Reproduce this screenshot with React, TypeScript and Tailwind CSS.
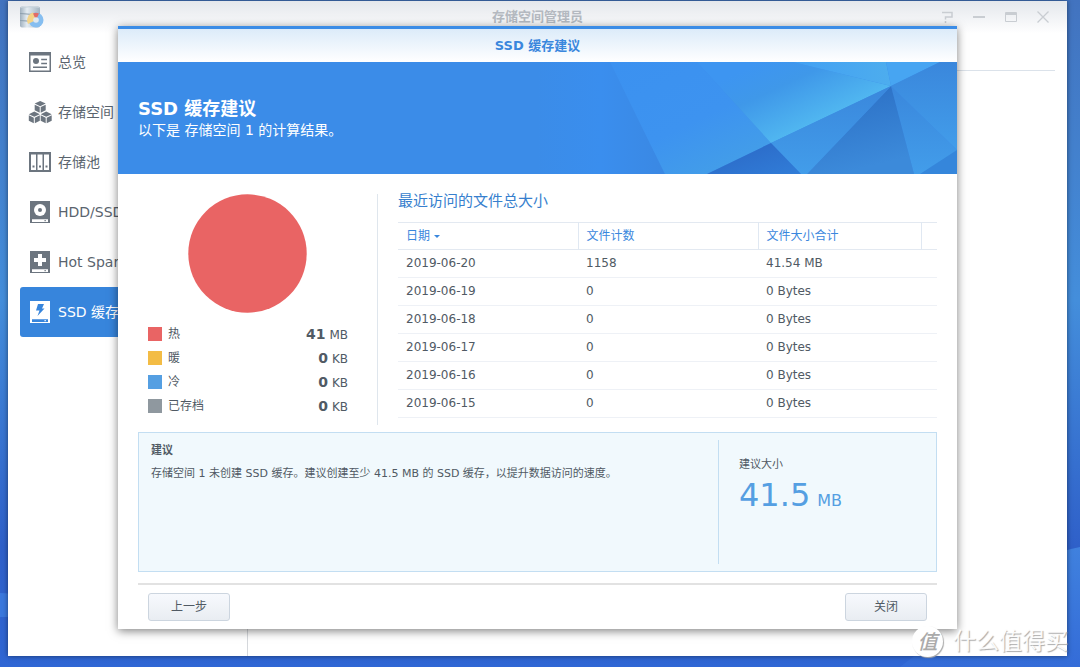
import type { ReactNode } from "react";
import clsx from "clsx";

const navItems = [
  { label: "总览", icon: <OverviewIcon /> },
  { label: "存储空间", icon: <VolumeIcon /> },
  { label: "存储池", icon: <PoolIcon /> },
  { label: "HDD/SSD", icon: <DiskIcon /> },
  { label: "Hot Spare", icon: <SpareIcon /> },
  { label: "SSD 缓存", icon: <CacheIcon />, active: true },
];

const legend = [
  { label: "热", value: "41", unit: "MB", color: "bg-[#e96464]" },
  { label: "暖", value: "0", unit: "KB", color: "bg-[#f3bc45]" },
  { label: "冷", value: "0", unit: "KB", color: "bg-[#559fe2]" },
  { label: "已存档", value: "0", unit: "KB", color: "bg-[#8f989f]" },
];

const rows = [
  { date: "2019-06-20", count: "1158", size: "41.54 MB" },
  { date: "2019-06-19", count: "0", size: "0 Bytes" },
  { date: "2019-06-18", count: "0", size: "0 Bytes" },
  { date: "2019-06-17", count: "0", size: "0 Bytes" },
  { date: "2019-06-16", count: "0", size: "0 Bytes" },
  { date: "2019-06-15", count: "0", size: "0 Bytes" },
];

function OverviewIcon() {
  return (
    <svg viewBox="0 0 24 24" className="h-6 w-6" fill="none">
      <path fill="currentColor" fillRule="evenodd" d="M1 2h22v20H1zM2.5 5.500v15h19v-15z" />
      <circle cx="8" cy="11" r="3" fill="currentColor" />
      <path stroke="currentColor" strokeWidth="1.6" d="M13.200 9.500h5.800M13.200 13.500h5.800M5 17.200h14" />
    </svg>
  );
}

function Cube({ x, y }: { x: number; y: number }) {
  return (
    <g transform={`translate(${x} ${y})`} fill="currentColor">
      <path d="M5.5 0 11 2.6 5.5 5.2 0 2.6z" />
      <path d="M0 3.7 5 6.1v5.6L0 9.2z" />
      <path d="M11 3.7 6 6.1v5.6l5-2.5z" />
    </g>
  );
}

function VolumeIcon() {
  return (
    <svg viewBox="0 0 24 24" className="h-6 w-6">
      <Cube x={6.7} y={1} />
      <Cube x={0.8} y={11.6} />
      <Cube x={12.7} y={11.6} />
    </svg>
  );
}

function PoolIcon() {
  return (
    <svg viewBox="0 0 24 24" className="h-6 w-6" fill="currentColor">
      <path fillRule="evenodd" d="M1 2h22v20H1zM3 4.5V20h5V4.5zM9.5 4.5V20h5V4.5zM16 4.5V20h5V4.5z" />
      <path d="M4.5 15.500h2v2h-2zM11 15.500h2v2h-2zM17.500 15.500h2v2h-2z" />
    </svg>
  );
}

function DriveBase({ children }: { children: ReactNode }) {
  return (
    <svg viewBox="0 0 24 24" className="h-6 w-6">
      <path fill="currentColor" fillRule="evenodd" d="M2 1h20v22H2zM4 19.2V22h16v-2.8z" />
      <path fill="currentColor" d="M16.5 20h1.3v1.2h-1.3z" />
      {children}
    </svg>
  );
}

function DiskIcon() {
  return (
    <DriveBase>
      <circle cx="12" cy="10" r="6" fill="#fff" />
      <circle cx="12" cy="10" r="2" fill="currentColor" />
    </DriveBase>
  );
}

function SpareIcon() {
  return (
    <DriveBase>
      <path fill="#fff" d="M10 4h4v4h4v4h-4v4h-4v-4H6V8h4z" />
    </DriveBase>
  );
}

function CacheIcon() {
  return (
    <DriveBase>
      <path fill="#3785dc" d="M10 4h6l-2 4.500h2.500L9.500 16l2-5.500H8z" />
    </DriveBase>
  );
}

function AppLogo() {
  return (
    <svg viewBox="0 0 24 24" className="h-6 w-6">
      <defs>
        <linearGradient id="drum">
          <stop offset="0" stopColor="#9fb0be" />
          <stop offset=".35" stopColor="#e4ecf2" />
          <stop offset="1" stopColor="#a3b3c0" />
        </linearGradient>
      </defs>
      <rect x="0" y="1.5" width="20" height="21" rx="2" fill="url(#drum)" />
      <path d="M0 8.500q10 1.500 20 0M0 15.500q10 1.500 20 0" stroke="#8d9fad" fill="none" />
      <path d="M1 2.500q9-1.500 18 0" stroke="#c5d1da" fill="none" />
      <circle cx="16" cy="15" r="7.500" fill="#86bef0" />
      <path d="M16 15 8 19A8 8 0 0 1 13.500 7.500z" fill="#f5d488" />
      <path d="M16 15 13 8.500q3-1.500 6 0z" fill="#e26c68" />
      <circle cx="16" cy="15" r="2.800" fill="#dfe8ef" />
    </svg>
  );
}

function WindowControls() {
  const button = "flex h-6 w-8 items-center justify-center";
  return (
    <div className="flex text-[#c9cdd2]">
      <button aria-label="帮助" className={button}>
        <svg viewBox="0 0 14 14" className="h-3.5 w-3.5" fill="none" stroke="currentColor" strokeWidth="1.500">
          <path d="M2 2.500h10v4.500H5.500v2.500M5.500 11v2" />
        </svg>
      </button>
      <button aria-label="最小化" className={button}>
        <svg viewBox="0 0 14 14" className="h-3.5 w-3.5" stroke="currentColor" strokeWidth="2">
          <path d="M1 7h12" />
        </svg>
      </button>
      <button aria-label="最大化" className={button}>
        <svg viewBox="0 0 14 14" className="h-3.5 w-3.5" fill="none" stroke="currentColor">
          <path d="M1.500 2.500h11v9h-11z" />
          <path strokeWidth="2" d="M1 4h12" />
        </svg>
      </button>
      <button aria-label="关闭窗口" className={button}>
        <svg viewBox="0 0 14 14" className="h-3.5 w-3.5" stroke="currentColor" strokeWidth="1.300">
          <path d="m1.500 1.500 11 11m0-11-11 11" />
        </svg>
      </button>
    </div>
  );
}

function Wallpaper() {
  return (
    <svg viewBox="0 0 1080 667" preserveAspectRatio="none" className="absolute inset-0 h-full w-full">
      <defs>
        <linearGradient id="sky" x1="0" y1="0" x2="0" y2="1">
          <stop offset="0" stopColor="#4273bf" />
          <stop offset=".45" stopColor="#448edb" />
          <stop offset=".82" stopColor="#2f60c9" />
          <stop offset="1" stopColor="#2f66d4" />
        </linearGradient>
        <linearGradient id="wave" x1="0" y1="0" x2="0" y2="1">
          <stop offset="0" stopColor="#4081de" />
          <stop offset="1" stopColor="#346cd8" />
        </linearGradient>
      </defs>
      <path fill="url(#sky)" d="M0 0h1080v667H0z" />
      <path fill="url(#wave)" d="M1080 547q-20 4-40 12L900 667h180z" />
      <path fill="#3a78dd" d="M0 593q10 0 30 4v20H0z" />
    </svg>
  );
}

function BannerArt() {
  return (
    <svg viewBox="0 0 420 112" className="h-28 w-[420px] shrink-0">
      <defs>
        <linearGradient id="fade" x1="0" x2="1" y1="0" y2="0">
          <stop offset="0" stopColor="#3b8ce8" />
          <stop offset=".5" stopColor="#3a8eee" />
          <stop offset="1" stopColor="#3a88e3" />
        </linearGradient>
        <linearGradient id="mid" x1="0" y1="0" x2=".7" y2="1">
          <stop offset="0" stopColor="#3b91f0" />
          <stop offset=".6" stopColor="#3d93f0" />
          <stop offset="1" stopColor="#439ee8" />
        </linearGradient>
        <linearGradient id="glow" gradientUnits="userSpaceOnUse" x1="257" y1="-16" x2="290" y2="54">
          <stop offset="0" stopColor="#3d95f1" />
          <stop offset=".4" stopColor="#3f98e9" />
          <stop offset="1" stopColor="#50b6f0" />
        </linearGradient>
        <linearGradient id="top" x1="0" x2="1" y1="0" y2="0">
          <stop offset="0" stopColor="#42a0f3" />
          <stop offset="1" stopColor="#4dadee" />
        </linearGradient>
        <linearGradient id="shade" x1="0" y1="0" x2="0" y2="1">
          <stop offset="0" stopColor="#3a87dc" />
          <stop offset="1" stopColor="#429dea" />
        </linearGradient>
        <linearGradient id="deep" x1="0" y1="0" x2=".3" y2="1">
          <stop offset="0" stopColor="#2a6dc3" />
          <stop offset="1" stopColor="#3c8ada" />
        </linearGradient>
        <linearGradient id="darkest" x1="0" y1="0" x2="1" y2="1">
          <stop offset="0" stopColor="#2a66c4" />
          <stop offset="1" stopColor="#317dd8" />
        </linearGradient>
      </defs>
      <path fill="url(#fade)" d="M0 0h73l55 112H0z" />
      <path fill="url(#mid)" d="M73 0h87l74 81-64 31h-42z" />
      <path fill="url(#glow)" d="M160 0h96l98 24-120 57z" />
      <path fill="url(#top)" d="M256 0h93l5 24z" />
      <path fill="#47a5f2" d="M349 0h54l-49 24z" />
      <path fill="url(#shade)" d="M403 0h17v88l-66-64z" />
      <path fill="url(#shade)" d="m354 24 66 64v24h-43z" />
      <path fill="#3586db" d="m420 88-37 24h37z" />
      <path fill="url(#deep)" d="m354 24 23 88H270z" />
      <path fill="url(#shade)" d="m354 24-84 88h-6l-30-31z" />
      <path fill="url(#darkest)" d="m234 81 30 31h-94z" />
    </svg>
  );
}

function Legend() {
  return (
    <ul className="mt-[9px] w-full pl-2.5 pr-[29px] text-xs">
      {legend.map((item) => (
        <li key={item.label} className="flex h-6 items-center gap-1.5">
          <span className={clsx("h-3.5 w-3.5", item.color)} />
          <span>{item.label}</span>
          <span className="ml-auto">
            <b className="text-sm">{item.value}</b> {item.unit}
          </span>
        </li>
      ))}
    </ul>
  );
}

function FileTable() {
  const head = "h-[27px] border-r border-[#e0e8f2] px-2 text-left font-normal";
  return (
    <table className="w-full table-fixed border-collapse text-xs">
      <colgroup>
        <col className="w-[180px]" />
        <col className="w-[180px]" />
        <col />
        <col className="w-4" />
      </colgroup>
      <thead className="border-y border-[#e3e9f1] text-[#3a87dd]">
        <tr>
          <th className={head}>
            <span className="flex items-center gap-1">
              日期
              <svg viewBox="0 0 6 3" className="h-[3px] w-1.5" fill="currentColor">
                <path d="M0 0h6L3 3z" />
              </svg>
            </span>
          </th>
          <th className={head}>文件计数</th>
          <th className={head}>文件大小合计</th>
          <td />
        </tr>
      </thead>
      <tbody>
        {rows.map((row) => (
          <tr key={row.date} className="h-7 border-b border-[#eef1f6]">
            <td className="px-2 pb-0.5">{row.date}</td>
            <td className="px-2 pb-0.5">{row.count}</td>
            <td className="px-2 pb-0.5">{row.size}</td>
            <td />
          </tr>
        ))}
      </tbody>
    </table>
  );
}

function DialogButton({ children }: { children: ReactNode }) {
  return (
    <button className="h-7 w-[82px] rounded-[3px] border border-[#ccd5df] bg-gradient-to-b from-[#f7f9fd] to-[#e9edf2] text-xs hover:to-[#f7f9fd]">
      {children}
    </button>
  );
}

function CacheAdvisorDialog() {
  return (
    <section
      role="dialog"
      aria-labelledby="dialog-title"
      className="absolute inset-x-[110px] top-[25px] flex flex-col border-t-[3px] border-[#3b8ce6] bg-white shadow-[0_2px_9px_rgba(0,0,0,0.5)]"
    >
      <header className="flex h-[33px] items-center justify-center bg-gradient-to-b from-[#dcebf9] to-white">
        <h1 id="dialog-title" className="text-[13px] font-bold leading-5 text-[#3a87dd]">SSD 缓存建议</h1>
      </header>

      <div className="flex h-28 justify-between overflow-hidden bg-[#3b8ce8] text-white">
        <div className="whitespace-nowrap pl-5 pt-9">
          <h2 className="text-lg font-bold leading-[22px]">SSD 缓存建议</h2>
          <p className="text-sm leading-5">以下是 存储空间 1 的计算结果。</p>
        </div>
        <BannerArt />
      </div>

      <div className="px-5 pt-5">
        <div className="flex">
          <div className="flex h-[231px] w-60 shrink-0 flex-col items-center border-r border-[#dfe6ed]">
            <svg viewBox="0 0 119 119" className="-ml-5 h-[119px] w-[119px] shrink-0">
              <circle cx="59.500" cy="59.500" r="59.200" fill="#e96464" />
            </svg>
            <Legend />
          </div>
          <div className="min-w-0 flex-1 pl-5">
            <h3 className="mb-3.5 text-[15px] leading-[14px] text-[#377fce]">最近访问的文件总大小</h3>
            <FileTable />
          </div>
        </div>

        <div className="mt-[7px] flex h-[140px] border border-[#c3def2] bg-[#f1f9fd] py-[7px] text-[11px] leading-4">
          <div className="flex-1 px-3 pt-[3px]">
            <h3 className="font-bold">建议</h3>
            <p className="mt-[7px]">存储空间 1 未创建 SSD 缓存。建议创建至少 41.5 MB 的 SSD 缓存，以提升数据访问的速度。</p>
          </div>
          <div className="w-[218px] border-l border-[#c3def2] pl-5 pt-[17px]">
            <h3>建议大小</h3>
            <p className="mt-1 text-[32px] leading-9 text-[#559fe2]">
              41.5<span className="ml-[7px] text-base">MB</span>
            </p>
          </div>
        </div>

        <footer className="mt-[11px] flex justify-between border-t-2 border-[#e2e2e2] px-2.5 py-2">
          <DialogButton>上一步</DialogButton>
          <DialogButton>关闭</DialogButton>
        </footer>
      </div>
    </section>
  );
}

function Watermark() {
  return (
    <div className="absolute bottom-2.5 right-3 flex items-center gap-2.5 whitespace-nowrap text-[23px] leading-8 text-white/90 [text-shadow:1px_1px_1px_#aaa]">
      <span className="flex h-[31px] w-[31px] items-center justify-center rounded-full bg-white font-['Noto_Sans_CJK_SC',sans-serif] text-xl font-medium italic text-[#aaa] shadow-[1px_1px_1px_#aaa] [text-shadow:none]">
        值
      </span>
      什么值得买
    </div>
  );
}

export default function App() {
  return (
    <div className="relative flex min-h-screen overflow-hidden pb-[11px] pl-2 pr-[13px] pt-px font-['DejaVu_Sans','Noto_Sans_CJK_SC',sans-serif] text-[#505a64]">
      <Wallpaper />
      <div className="relative flex min-h-[655px] flex-1 flex-col bg-white shadow-[0_0_5px_rgba(0,0,0,0.5)]">
        <header className="grid h-9 grid-cols-[1fr_auto_1fr] items-start bg-gradient-to-b from-[#e4e7ec] to-white to-90% pt-1">
          <div className="pl-3">
            <AppLogo />
          </div>
          <h1 className="text-[13px] font-bold leading-6 text-[#b4b9c0]">存储空间管理员</h1>
          <div className="flex justify-end pr-2">
            <WindowControls />
          </div>
        </header>

        <div className="flex flex-1">
          <nav className="w-60 border-r border-[#d5d8dc] px-3">
            {navItems.map((item) => (
              <a
                key={item.label}
                href="#"
                className={clsx(
                  "flex h-[50px] items-center gap-1.5 rounded-[3px] px-2 text-sm",
                  item.active ? "bg-[#3785dc] text-white" : "text-[#6c757f]"
                )}
              >
                {item.icon}
                <span className={clsx(!item.active && "text-[#5a646e]")}>{item.label}</span>
              </a>
            ))}
          </nav>
          <main className="flex-1 px-3">
            <div className="h-[34px] border-b border-[#dbe2ea]" />
          </main>
        </div>

        <CacheAdvisorDialog />
      </div>
      <Watermark />
    </div>
  );
}
